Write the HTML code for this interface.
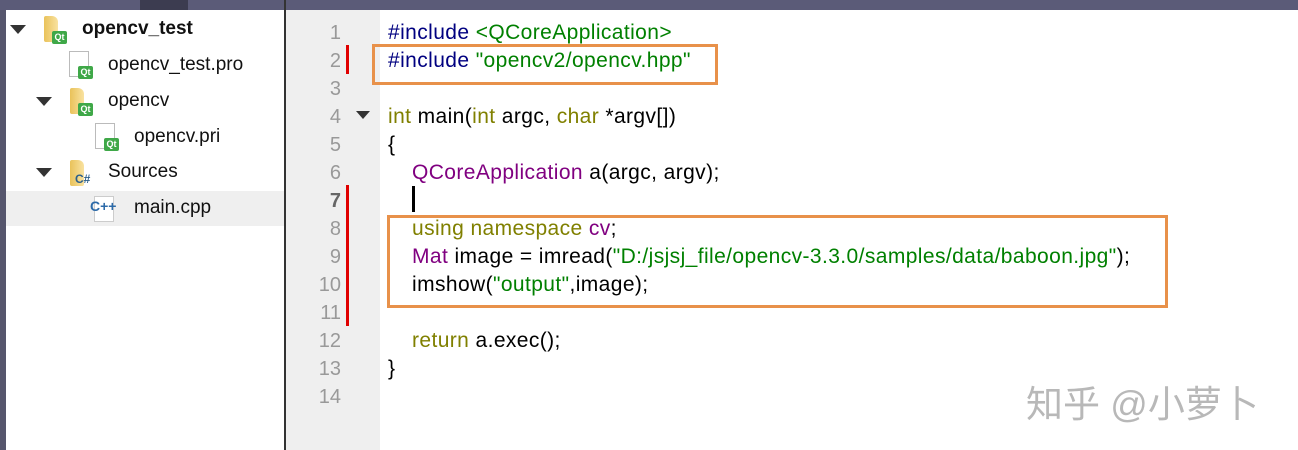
<!DOCTYPE html>
<html><head><meta charset="utf-8"><style>
*{margin:0;padding:0;box-sizing:border-box}
body{width:1298px;height:450px;overflow:hidden;background:#fff;position:relative;font-family:"Liberation Sans","Noto Sans CJK SC",sans-serif}
.a{position:absolute}
.t{position:absolute;font-size:19px;color:#111;line-height:20px;white-space:pre}
.code{position:absolute;font-size:21px;line-height:28px;white-space:pre;color:#000;left:388px;letter-spacing:0.4px}
.ln{position:absolute;right:957px;width:40px;text-align:right;font-size:20px;line-height:28px;color:#999}
.n{color:#000080}.g{color:#008000}.o{color:#808000}.p{color:#800080}
.fold{position:absolute;width:14px;height:26px;background:linear-gradient(90deg,#e9c25a,#f9e2a0);border-radius:2px 6px 2px 2px}
.qt{position:absolute;width:15px;height:13px;background:#3fa848;border-radius:2px;color:#fff;font-size:9px;font-weight:bold;line-height:13px;text-align:center;font-family:"Liberation Sans",sans-serif}
.file{position:absolute;width:20px;height:26px;border:1px solid #bbb;background:#fff}
.tri{position:absolute;width:0;height:0;border-left:8px solid transparent;border-right:8px solid transparent;border-top:9px solid #333}
</style></head><body>
<div class="a" style="left:0;top:0;width:1298px;height:10px;background:#5b5b78"></div>
<div class="a" style="left:140px;top:0;width:48px;height:10px;background:#3c3c50"></div>
<div class="a" style="left:0;top:10px;width:6px;height:440px;background:#56566d"></div>
<div class="a" style="left:284px;top:0;width:2px;height:450px;background:#333"></div>
<div class="a" style="left:286px;top:10px;width:94px;height:440px;background:#efefef"></div>
<div class="a" style="left:6px;top:191px;width:278px;height:35px;background:#efefef"></div>

<!-- tree -->
<div class="tri" style="left:10px;top:25px"></div>
<div class="fold" style="left:44px;top:16px"></div><div class="qt" style="left:52px;top:31px">Qt</div>
<div class="t" style="left:82px;top:19px;font-weight:bold">opencv_test</div>
<div class="file" style="left:69px;top:51px"></div><div class="qt" style="left:78px;top:66px">Qt</div>
<div class="t" style="left:108px;top:55px">opencv_test.pro</div>
<div class="tri" style="left:36px;top:97px"></div>
<div class="fold" style="left:70px;top:88px"></div><div class="qt" style="left:78px;top:103px">Qt</div>
<div class="t" style="left:108px;top:91px">opencv</div>
<div class="file" style="left:95px;top:123px"></div><div class="qt" style="left:104px;top:138px">Qt</div>
<div class="t" style="left:134px;top:127px">opencv.pri</div>
<div class="tri" style="left:36px;top:168px"></div>
<div class="fold" style="left:70px;top:160px"></div><div class="a" style="left:75px;top:172px;font-size:12px;font-weight:bold;color:#2c5f8a">C#</div>
<div class="t" style="left:108px;top:162px">Sources</div>
<div class="file" style="left:94px;top:196px;border-color:#ccc"></div><div class="a" style="left:90px;top:198px;font-size:14px;font-weight:bold;color:#2c6aa8">C++</div>
<div class="t" style="left:134px;top:198px">main.cpp</div>

<!-- gutter -->
<div class="a" style="left:346px;top:45px;width:3px;height:29px;background:#e00000"></div>
<div class="a" style="left:346px;top:185px;width:3px;height:141px;background:#e00000"></div>
<div class="tri" style="left:356px;top:111px;border-left-width:7px;border-right-width:7px;border-top-width:8px"></div>
<div class="ln" style="left:301px;top:19px">1<br>2<br>3<br>4<br>5<br>6<br><b style="color:#666">7</b><br>8<br>9<br>10<br>11<br>12<br>13<br>14</div>

<!-- code -->
<div class="code" style="top:19px"><span class="n">#include</span> <span class="g">&lt;QCoreApplication&gt;</span>
<span class="n">#include</span> <span class="g">"opencv2/opencv.hpp"</span>

<span class="o">int</span> main(<span class="o">int</span> argc, <span class="o">char</span> *argv[])
{
<span style="padding-left:24px"></span><span class="p">QCoreApplication</span> a(argc, argv);

<span style="padding-left:24px"></span><span class="o">using namespace</span> <span class="p">cv</span>;
<span style="padding-left:24px"></span><span class="p">Mat</span> image = imread(<span class="g">"D:/jsjsj_file/opencv-3.3.0/samples/data/baboon.jpg"</span>);
<span style="padding-left:24px"></span>imshow(<span class="g">"output"</span>,image);

<span style="padding-left:24px"></span><span class="o">return</span> a.exec();
}</div>
<div class="a" style="left:412px;top:186px;width:3px;height:26px;background:#000"></div>

<div class="a" style="left:372px;top:44px;width:346px;height:41px;border:3px solid #e8914a"></div>
<div class="a" style="left:387px;top:215px;width:781px;height:93px;border:3px solid #e8914a"></div>

<div class="a" style="left:1026px;top:374px;font-size:37px;color:#b8b8b8;font-family:'Liberation Sans','Noto Sans CJK SC',sans-serif;white-space:nowrap">知乎 @小萝卜</div>
</body></html>
